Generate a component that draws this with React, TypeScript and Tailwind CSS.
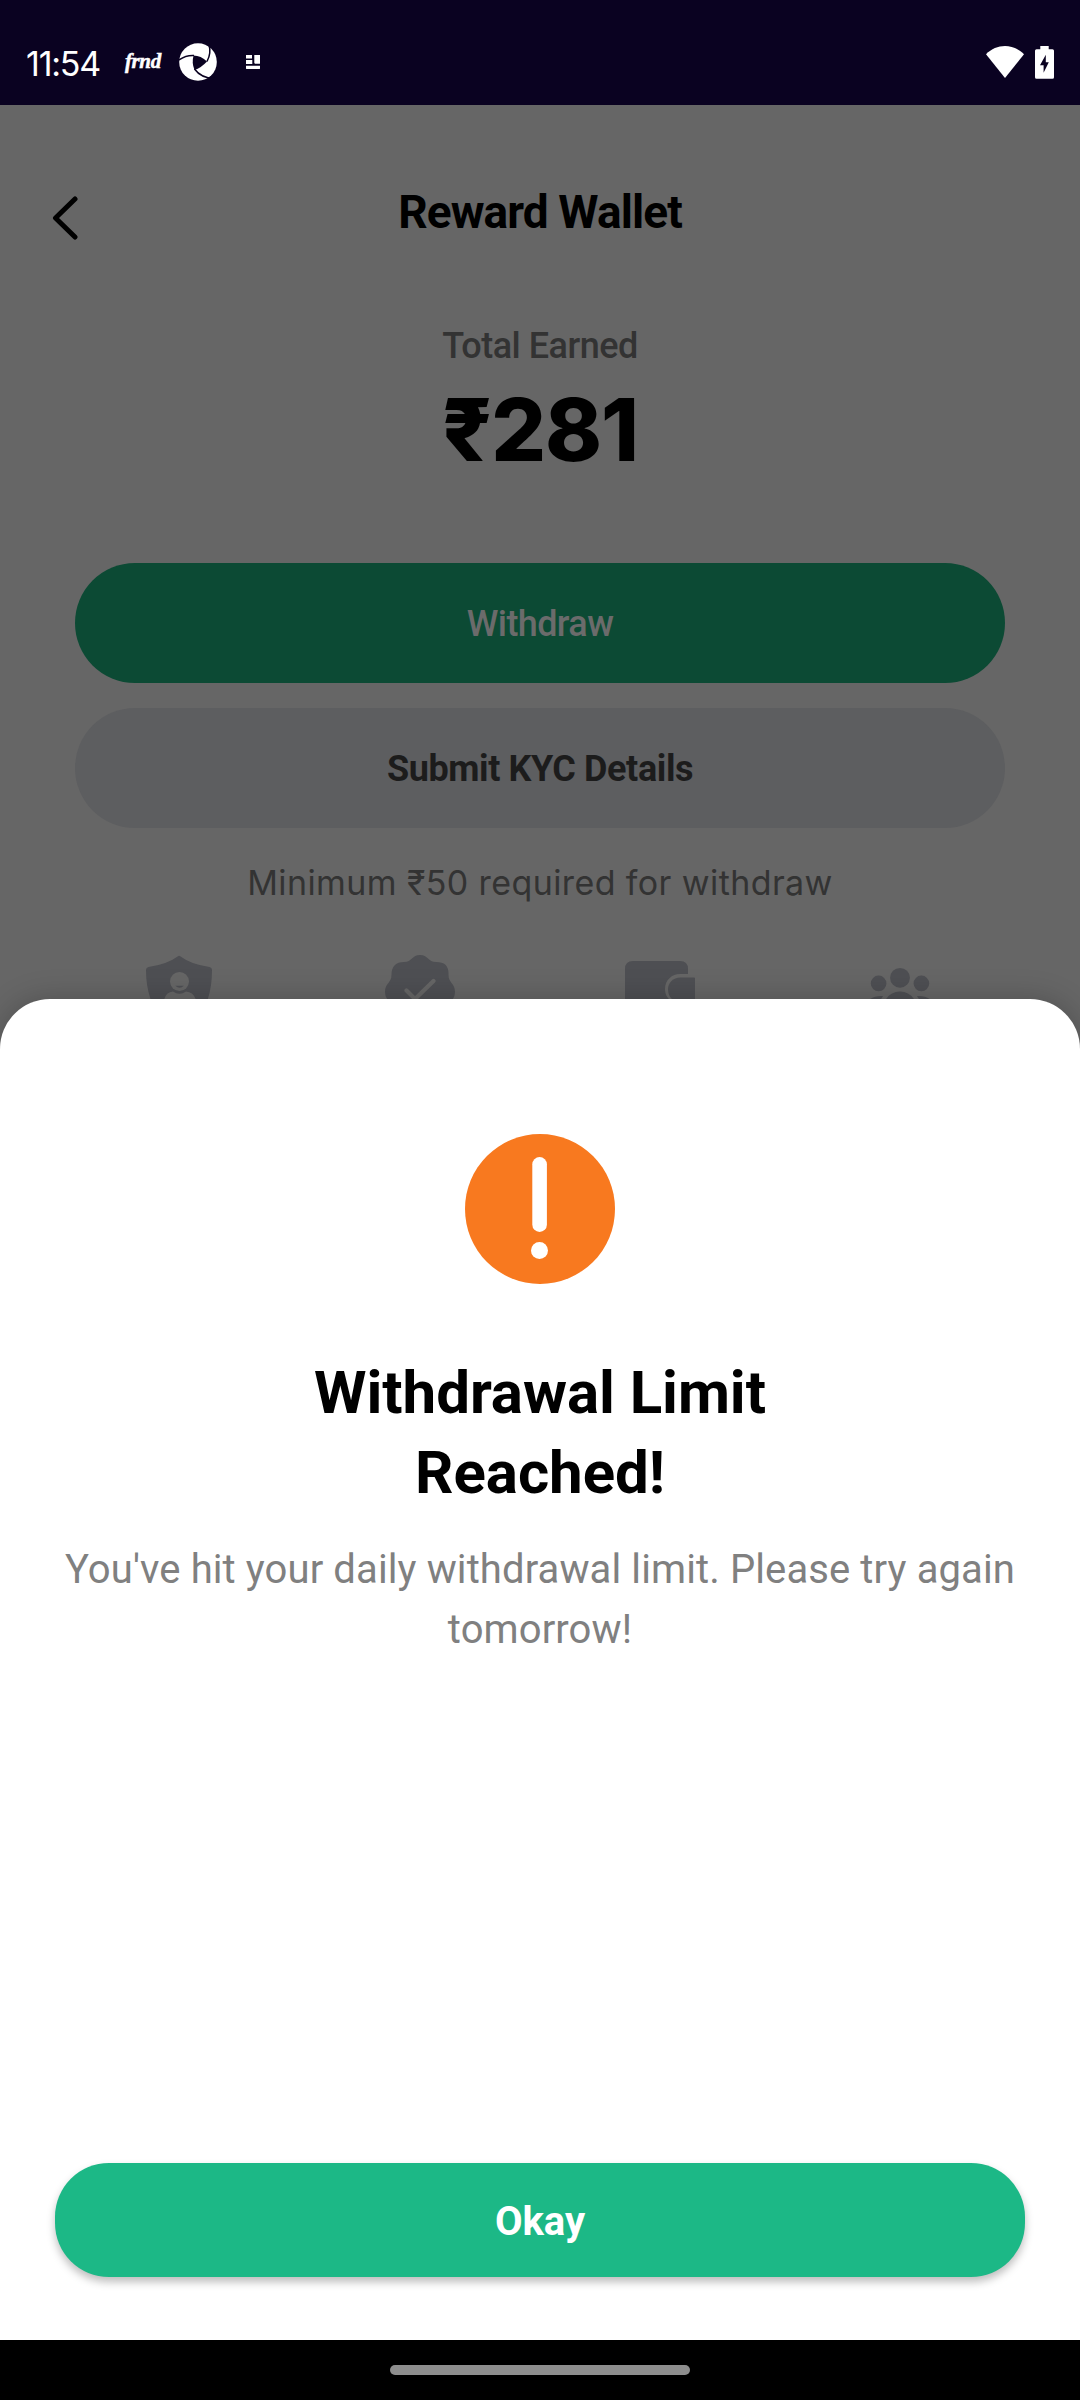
const iconFill = "#4e4f53";

function StatusBar() {
  return (
    <header className="flex h-[105px] items-start justify-between bg-[#0a0221] pl-[26px] pr-[26px] text-white">
      <div className="flex h-[105px] items-start">
        <span className="mt-[44px] w-[99px] whitespace-nowrap font-['Inter'] text-[34px] leading-[40px] tracking-[-1.2px]">11:54</span>
        <span className="mt-[48px] w-[54px] font-['Liberation_Serif'] text-[21px] font-bold italic leading-[26px] tracking-[-0.4px] [-webkit-text-stroke:0.5px_white]">frnd</span>
        <svg className="mt-[43px]" width="38" height="38" viewBox="0 0 38 38">
          <circle cx="19" cy="19" r="18.8" fill="#fff" />
          <path d="M14.5 12.500Q22 12.500 28 18.500Q22 25 15.500 27Q12.500 20 14.500 12.500Z" fill="#0a0221" />
          <g fill="none" stroke="#0a0221" strokeWidth="1.500">
            <path d="M28 18.500Q32.500 10 30 2" />
            <path d="M15 12.500Q7 12 0 17" />
            <path d="M15.500 26Q22 35 35 35.500" />
          </g>
        </svg>
        <svg className="ml-[29px] mt-[55px]" width="14" height="15" viewBox="0 0 14 15" fill="#fff">
          <path d="M0 0h6v3.500H0zM0 5h6.300v4H0zM8.300 0H14v8.700H9L8.300 8zM0 10.700h14v3l-.6.4H.6l-.6-.4z" />
        </svg>
      </div>
      <div className="flex items-start gap-[11px] pt-[46px]">
        <svg width="38" height="32" viewBox="0 0 38 32" fill="#fff">
          <path d="M0 8.300C10.500-2.700 27.500-2.700 38 8.300L19 32Z" />
        </svg>
        <svg width="19" height="33" viewBox="0 0 19 33">
          <path d="M5.300 0h8.400v3.200H17.500q1.500 0 1.500 1.500V31.200q0 1.500-1.500 1.500h-16Q0 32.700 0 31.200V4.700q0-1.500 1.500-1.500h3.800z" fill="#fff" />
          <path d="M10.800 8.800v7.500h3L8.600 26.800v-7.500H5z" fill="#0a0221" />
        </svg>
      </div>
    </header>
  );
}

function FeatureIcons() {
  return (
    <div className="mx-[60px] mt-[45px] grid h-[49px] shrink-0 grid-cols-4 overflow-hidden">
      <svg className="ml-[80px]" width="80" height="50" viewBox="0 0 80 50">
        <path d="M38 6.300Q39 5.200 40.200 6.300Q51 14.500 69.500 17Q72 17.300 72 20Q72 37 67.500 50H10.800Q6 36 6 20Q6 17.300 8.500 17Q27 14.500 38 6.300Z" fill={iconFill} />
        <circle cx="39.500" cy="31.500" r="9.500" fill="#666" />
        <path d="M35.300 35.700h8.600q-4.300 4-8.600 0z" fill={iconFill} />
        <path d="M24 50q2-8 9-8.500 6.500 4.500 13 0 7.500.5 10 8.500z" fill="#666" />
      </svg>
      <svg className="ml-[80px]" width="80" height="50" viewBox="0 0 80 50">
        <path d="M40 5c8 0 8 7 16 7c9 0 13 4 12.500 13c0 8 6.500 8 6.500 17q0 5-3 8H8q-3-3-3-8c0-9 6.500-9 6.500-17C11.500 16 16 12 24 12c8 0 8-7 16-7z" fill={iconFill} />
        <path d="m26.500 40.500 8.500 8.500L53.500 31" fill="none" stroke="#666" strokeWidth="4.200" strokeLinecap="round" />
      </svg>
      <svg className="ml-[80px]" width="80" height="50" viewBox="0 0 80 50">
        <path d="M5 19q0-8 8-8h47q8 0 8 8v5h-8c-8 0-15 6-15 15q0 7 5 11H5z" fill={iconFill} />
        <path d="M75 28q0-.5-1-.5H60.500C53 27.500 48 33 48 39q0 7 5 11h22z" fill={iconFill} />
      </svg>
      <svg className="ml-[80px]" width="80" height="50" viewBox="0 0 80 50" fill={iconFill}>
        <circle cx="40" cy="27.800" r="9.900" />
        <circle cx="18.600" cy="33.400" r="7.800" />
        <circle cx="61.400" cy="33.400" r="7.800" />
        <path d="M25.500 50Q30.500 41.500 40 41.500T54.500 50z" />
        <path d="M9 50q5-4.500 14-4l-2.500 4zM71 50q-5-4.500-14-4l2.500 4z" />
      </svg>
    </div>
  );
}

function WalletPage() {
  return (
    <main className="flex h-[894px] flex-col bg-[#666] text-center">
      <div className="flex h-[150px] shrink-0 items-start">
        <svg className="ml-[52px] mt-[90px]" width="27" height="46" viewBox="0 0 27 46">
          <path d="M23 4 3.500 23 23 42" fill="none" stroke="#000" strokeWidth="5" strokeLinecap="round" strokeLinejoin="round" />
        </svg>
        <h1 className="mr-[79px] mt-[77px] flex-1 text-[46px] font-bold leading-[60px] tracking-[-0.9px] text-black">Reward Wallet</h1>
      </div>
      <p className="mt-[71px] text-[36px] font-medium leading-[40px] tracking-[-0.5px] text-[#333]">Total Earned</p>
      <p className="mt-[11px] font-['Inter'] text-[86px] font-extrabold leading-[106px] tracking-[-1px] text-black">₹281</p>
      <button className="mx-[75px] mt-[80px] h-[120px] shrink-0 rounded-full bg-[#0c4a34] pt-[2px] text-[36px] font-medium tracking-[-0.600px] text-[#6b6b6b]">Withdraw</button>
      <button className="mx-[75px] mt-[25px] h-[120px] shrink-0 rounded-full bg-[#5d5e60] pt-[2px] text-[36px] font-bold tracking-[-0.400px] text-[#1c1c1c]">Submit KYC Details</button>
      <p className="mt-[33px] font-['Inter'] text-[34px] leading-[44px] tracking-[0.400px] text-[#333]">Minimum ₹50 required for withdraw</p>
      <FeatureIcons />
    </main>
  );
}

function LimitSheet() {
  return (
    <section className="relative flex h-[1341px] flex-col rounded-t-[50px] bg-white text-center shadow-[0_0_30px_rgba(0,0,0,0.22)]">
      <svg className="mx-auto mt-[135px] shrink-0" width="150" height="150" viewBox="0 0 150 150">
        <circle cx="75" cy="75" r="75" fill="#f8791f" />
        <rect x="67.300" y="23" width="14.600" height="75" rx="7.300" fill="#fff" />
        <circle cx="74.500" cy="116.500" r="8.500" fill="#fff" />
      </svg>
      <h2 className="mt-[69px] text-[60px] font-bold leading-[80px] tracking-[-0.050px] text-black">Withdrawal Limit<br />Reached!</h2>
      <p className="mt-[27px] text-[40px] leading-[60px] tracking-[0.110px] text-[#808080]">You've hit your daily withdrawal limit. Please try again<br />tomorrow!</p>
      <button className="mx-[55px] mb-[63px] mt-auto h-[114px] shrink-0 rounded-[54px] bg-[#1cb886] pt-[4px] text-[40px] font-bold text-white shadow-[0_5px_8px_rgba(0,0,0,0.26)]">Okay</button>
    </section>
  );
}

export default function App() {
  return (
    <div className="h-[2400px] w-[1080px] overflow-hidden bg-[#666] font-['Roboto',sans-serif]">
      <StatusBar />
      <WalletPage />
      <LimitSheet />
      <footer className="relative flex h-[60px] items-center justify-center bg-black">
        <div className="h-[10px] w-[300px] rounded-full bg-[#8e8e8e]" />
      </footer>
    </div>
  );
}
